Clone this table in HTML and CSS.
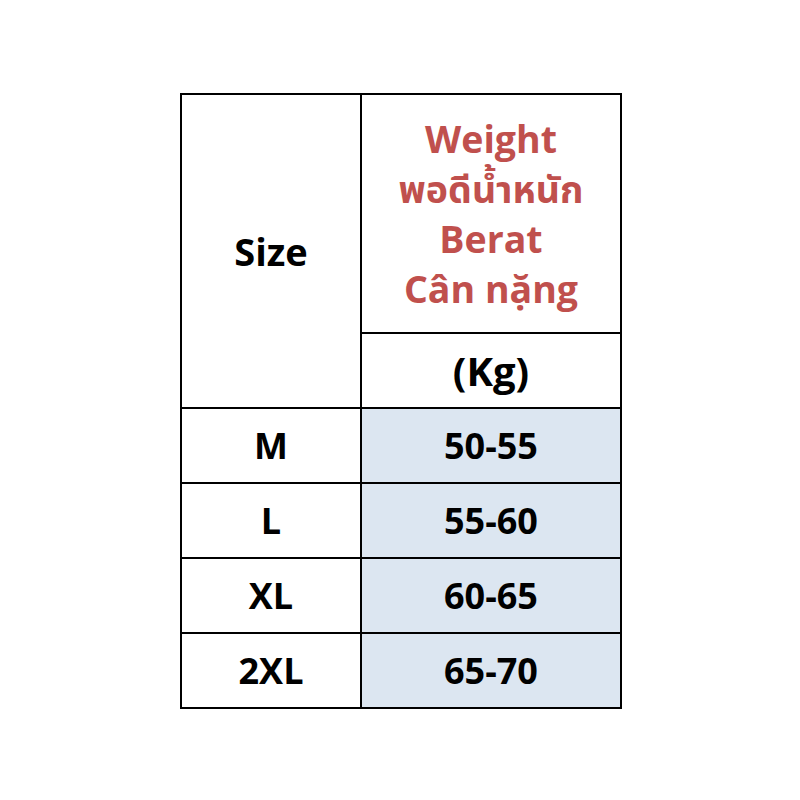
FILE: index.html
```html
<!DOCTYPE html>
<html>
<head>
<meta charset="utf-8">
<link rel="stylesheet" href="styles.css">
</head>
<body>
<div class="page">
<table class="size-table">
  <tr class="head">
    <td class="size-head" rowspan="2">Size</td>
    <td class="weight-head">Weight<br>พอดีน้ำหนัก<br>Berat<br>Cân nặng</td>
  </tr>
  <tr class="unit">
    <td>(Kg)</td>
  </tr>
  <tr class="row"><td>M</td><td class="val">50-55</td></tr>
  <tr class="row"><td>L</td><td class="val">55-60</td></tr>
  <tr class="row"><td>XL</td><td class="val">60-65</td></tr>
  <tr class="row"><td>2XL</td><td class="val">65-70</td></tr>
</table>
</div>
</body>
</html>
```
FILE: styles.css
```css
html, body {
  margin: 0;
  padding: 0;
  background: #ffffff;
}
.page {
  width: 800px;
  height: 800px;
  padding-top: 93px;
  padding-left: 180px;
  box-sizing: border-box;
}
.size-table {
  border-collapse: collapse;
  font-family: "Open Sans", "Noto Sans", "Noto Sans Thai", sans-serif;
  font-weight: 700;
  color: #000;
}
.size-table td {
  border: 2px solid #000;
  text-align: center;
  vertical-align: middle;
  padding: 0;
  font-size: 36px;
}
.size-table td:first-child {
  width: 178px;
}
.size-table .size-head {
  font-size: 38px;
}
.size-table td.val,
.size-table .unit td,
.size-table .weight-head {
  width: 258px;
}
.head td {
  height: 237px;
}
.size-table .weight-head {
  color: #c0504d;
  line-height: 50px;
  font-size: 37.5px;
}
.size-table .unit td {
  height: 73px;
  font-size: 40px;
}
.row td {
  height: 73px;
}
.row td.val {
  background: #dce6f1;
}
```
